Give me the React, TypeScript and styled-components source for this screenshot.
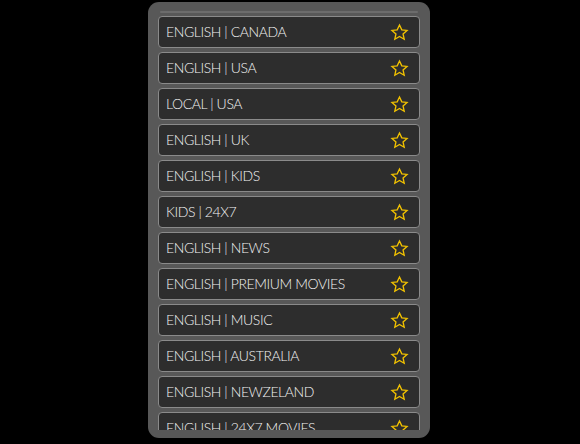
import React from 'react'
import styled, { createGlobalStyle } from 'styled-components'

const GlobalStyle = createGlobalStyle`
  html, body {
    margin: 0;
    padding: 0;
    background: #000;
  }
  body {
    font-family: Lato, "Open Sans", sans-serif;
  }
`

const Page = styled.div`
  display: flex;
  justify-content: center;
  padding: 2px 2px 0 0;
`

const Panel = styled.div`
  width: 282px;
  height: 436px;
  box-sizing: border-box;
  padding: 9px 10px 8px;
  background: #585858;
  border-radius: 11px;
  display: flex;
  flex-direction: column;
`

const Divider = styled.div`
  height: 2px;
  margin: 0 2px 3px;
  border-radius: 1px;
  background: #6c6c6c;
`

const List = styled.div`
  flex: 1;
  overflow: hidden;
  display: flex;
  flex-direction: column;
  gap: 4px;
`

const Row = styled.div`
  flex: 0 0 auto;
  height: 32px;
  box-sizing: border-box;
  border: 1.5px solid #8a8a8a;
  border-radius: 4px;
  background: #2d2d2d;
  display: flex;
  align-items: center;
  padding: 0 10px 0 7px;
`

const Label = styled.span`
  flex: 1;
  color: #f4f4f4;
  font-size: 14px;
  font-weight: 300;
  letter-spacing: -0.4px;
  padding-bottom: 2px;
`

const StarIcon = () => (
  <svg width="19" height="19" viewBox="0 0 24 24" fill="none">
    <path
      d="M12 2.5l2.9 6.2 6.6.7-5 4.5 1.4 6.6L12 17.1l-5.9 3.4 1.4-6.6-5-4.5 6.6-.7z"
      stroke="#f2c200"
      strokeWidth="1.7"
      strokeLinejoin="miter"
    />
  </svg>
)

const channels = [
  'ENGLISH | CANADA',
  'ENGLISH | USA',
  'LOCAL | USA',
  'ENGLISH | UK',
  'ENGLISH | KIDS',
  'KIDS | 24X7',
  'ENGLISH | NEWS',
  'ENGLISH | PREMIUM MOVIES',
  'ENGLISH | MUSIC',
  'ENGLISH | AUSTRALIA',
  'ENGLISH | NEWZELAND',
  'ENGLISH | 24X7 MOVIES',
]

export default function App() {
  return (
    <Page>
      <GlobalStyle />
      <Panel>
        <Divider />
        <List>
          {channels.map((name) => (
            <Row key={name}>
              <Label>{name}</Label>
              <StarIcon />
            </Row>
          ))}
        </List>
      </Panel>
    </Page>
  )
}
